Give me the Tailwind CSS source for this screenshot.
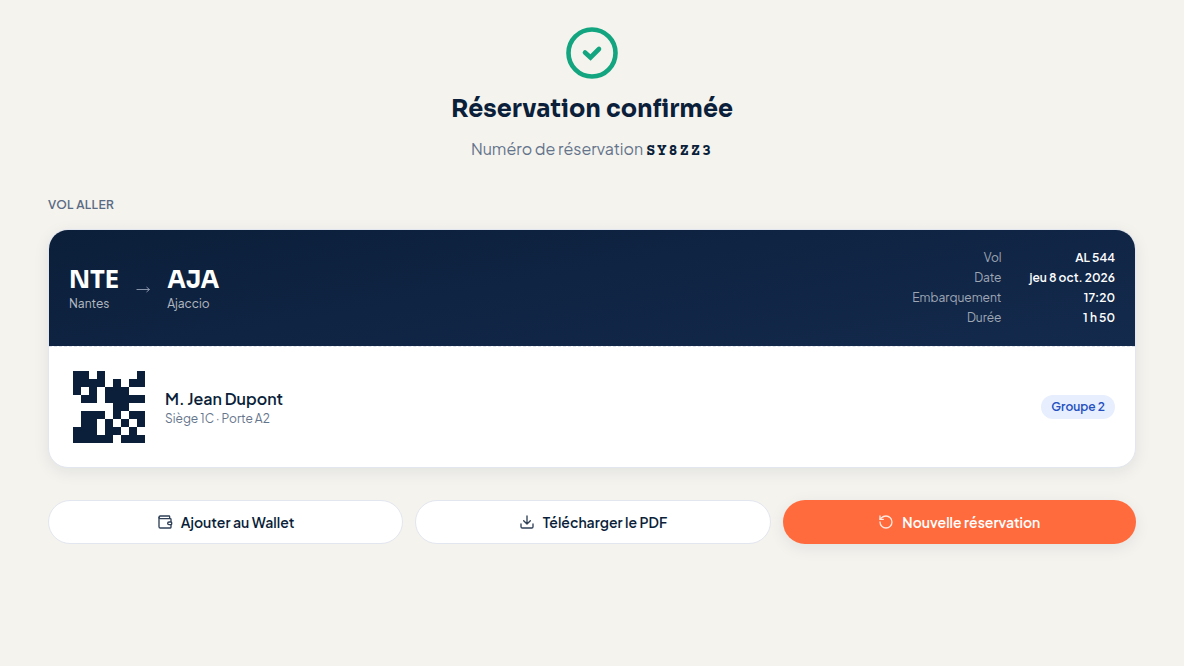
<!DOCTYPE html>
<html lang="fr">
<head>
    <meta charset="UTF-8">
    <meta name="viewport" content="width=device-width, initial-scale=1.0">
    <title>Réservation confirmée</title>
    <script src="https://cdn.jsdelivr.net/npm/@tailwindcss/browser@4"></script>
</head>
<body class="min-h-screen bg-[#f4f3ee] font-['Plus_Jakarta_Sans','Roboto',sans-serif] text-[#0b1f3a]">
    <main class="px-5 pt-6 pb-12 sm:px-12">
        <!-- Confirmation -->
        <header class="flex flex-col items-center text-center">
            <svg class="size-[58px]" viewBox="0 0 58 58" fill="none" stroke="#12a57f" aria-hidden="true">
                <circle cx="29" cy="29" r="23.5" stroke-width="4.6"/>
                <path d="M22 28.5l5.5 5 8.5-8.5" stroke-width="4.6" stroke-linecap="round"/>
            </svg>
            <h1 class="mt-[9px] font-['Sora','Inter',sans-serif] text-2xl leading-9 font-bold">Réservation confirmée</h1>
            <p class="mt-[10px] text-base text-[#64748b]">
                Numéro de réservation
                <strong class="font-['Courier_Prime',monospace] tracking-widest text-[#0b1f3a]">SY8ZZ3</strong>
            </p>
        </header>

        <!-- Boarding pass -->
        <section class="mt-8">
            <h2 class="text-xs leading-5 font-semibold tracking-wide text-[#5b6b84] uppercase">Vol aller</h2>
            <article class="mt-[14px] overflow-hidden rounded-[20px] border border-[#e2e6ee] bg-white shadow-[0_4px_16px_rgba(11,31,58,0.08)]">
                <div class="flex flex-wrap items-center justify-between gap-4 bg-linear-170 from-[#0b1f3a] to-[#142a4d] px-5 py-[18px] text-white">
                    <div class="flex items-center gap-4">
                        <div>
                            <div class="font-['Sora','Inter',sans-serif] text-2xl font-bold">NTE</div>
                            <div class="text-xs text-white/70">Nantes</div>
                        </div>
                        <svg class="mt-1 h-4 w-4" viewBox="0 0 16 16" fill="none" stroke="#8592a8" aria-hidden="true">
                            <path d="M1.5 7.5h13M11.5 5l3 2.5-3 2.5"/>
                        </svg>
                        <div>
                            <div class="font-['Sora','Inter',sans-serif] text-2xl font-bold">AJA</div>
                            <div class="text-xs text-white/70">Ajaccio</div>
                        </div>
                    </div>
                    <dl class="grid grid-cols-[auto_auto] gap-x-7 text-right text-xs leading-5">
                        <dt class="text-white/60">Vol</dt>
                        <dd class="font-semibold">AL 544</dd>
                        <dt class="text-white/60">Date</dt>
                        <dd class="font-semibold">jeu 8 oct. 2026</dd>
                        <dt class="text-white/60">Embarquement</dt>
                        <dd class="font-semibold">17:20</dd>
                        <dt class="text-white/60">Durée</dt>
                        <dd class="font-semibold">1 h 50</dd>
                    </dl>
                </div>
                <div class="flex items-center gap-4 border-t border-dashed border-[#dfe3ee] p-5">
                    <svg class="size-20 shrink-0" viewBox="-.5 -.5 10 10" fill="#0b1f3a" shape-rendering="crispEdges" role="img" aria-label="Code d'embarquement">
                        <path d="M0 0h2v1h-2zM3 0h1v1h-1zM8 0h1v1h-1z"/>
                        <path d="M0 1h4v1h-4zM5 1h1v1h-1zM7 1h2v1h-2z"/>
                        <path d="M0 2h1v1h-1zM2 2h1v1h-1zM4 2h3v1h-3z"/>
                        <path d="M1 3h2v1h-2zM4 3h5v1h-5z"/>
                        <path d="M5 4h2v1h-2z"/>
                        <path d="M1 5h3v1h-3zM5 5h1v1h-1zM7 5h2v1h-2z"/>
                        <path d="M1 6h2v1h-2zM4 6h1v1h-1zM6 6h1v1h-1zM8 6h1v1h-1z"/>
                        <path d="M0 7h3v1h-3zM4 7h2v1h-2zM7 7h1v1h-1z"/>
                        <path d="M0 8h5v1h-5zM6 8h3v1h-3z"/>
                    </svg>
                    <div class="flex-1">
                        <div class="text-base leading-6 font-semibold">M. Jean Dupont</div>
                        <div class="text-xs text-[#64748b]">Siège 1C · Porte A2</div>
                    </div>
                    <span class="rounded-full bg-[#e7eefd] px-[10px] py-1 text-xs font-semibold text-[#2450c0]">Groupe 2</span>
                </div>
            </article>
        </section>

        <!-- Actions -->
        <div class="mt-8 flex flex-wrap gap-3 text-sm font-semibold">
            <button type="button" class="flex h-11 flex-1 items-center justify-center gap-2 rounded-full border border-[#e2e6ee] bg-white whitespace-nowrap">
                <svg class="size-4 opacity-85" viewBox="0 0 24 24" fill="none" stroke="currentColor" stroke-width="2" stroke-linecap="round" stroke-linejoin="round" aria-hidden="true">
                    <path d="M19 7V4a1 1 0 0 0-1-1H5a2 2 0 0 0 0 4h15a1 1 0 0 1 1 1v4h-3a2 2 0 0 0 0 4h3a1 1 0 0 0 1-1v-2a1 1 0 0 0-1-1"/>
                    <path d="M3 5v14a2 2 0 0 0 2 2h15a1 1 0 0 0 1-1v-4"/>
                </svg>
                Ajouter au Wallet
            </button>
            <button type="button" class="flex h-11 flex-1 items-center justify-center gap-2 rounded-full border border-[#e2e6ee] bg-white whitespace-nowrap">
                <svg class="size-4 opacity-85" viewBox="0 0 24 24" fill="none" stroke="currentColor" stroke-width="2" stroke-linecap="round" stroke-linejoin="round" aria-hidden="true">
                    <path d="M21 15v4a2 2 0 0 1-2 2H5a2 2 0 0 1-2-2v-4M7 10l5 5 5-5M12 15V3"/>
                </svg>
                Télécharger le PDF
            </button>
            <button type="button" class="flex h-11 flex-1 items-center justify-center gap-2 rounded-full bg-[#ff6b3d] whitespace-nowrap text-white shadow-[0_4px_16px_rgba(11,31,58,0.08)]">
                <svg class="size-4 opacity-85" viewBox="0 0 24 24" fill="none" stroke="currentColor" stroke-width="2" stroke-linecap="round" stroke-linejoin="round" aria-hidden="true">
                    <path d="M3 12a9 9 0 1 0 9-9 9.75 9.75 0 0 0-6.74 2.74L3 8"/>
                    <path d="M3 3v5h5"/>
                </svg>
                Nouvelle réservation
            </button>
        </div>
    </main>
</body>
</html>
